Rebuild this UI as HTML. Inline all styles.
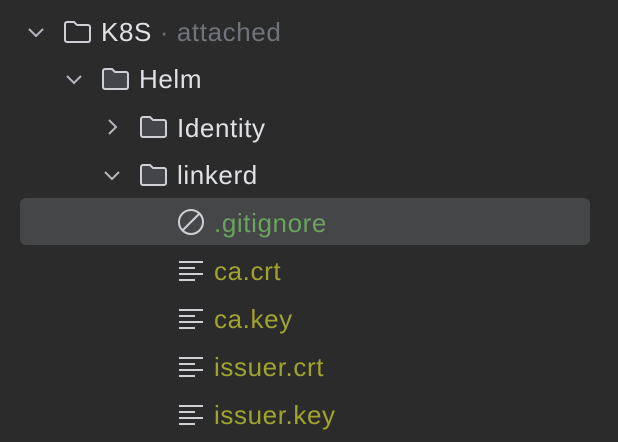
<!DOCTYPE html>
<html><head><style>
body{margin:0;width:618px;height:442px;background:#2b2b2b;font-family:"Liberation Sans",sans-serif;font-size:26px;letter-spacing:0.6px;color:#dfe1e5;position:relative;overflow:hidden}
.r{position:absolute;height:48px;line-height:50px;white-space:nowrap}
.sel{position:absolute;left:20px;top:198px;width:570px;height:47px;background:#454647;border-radius:6px}
svg{position:absolute}
</style></head><body>
<div class="sel"></div>
<svg style="left:26px;top:22px" width="20" height="20"><path d="M3 7l7 7 7-7" fill="none" stroke="#b4b8bf" stroke-width="2"/></svg>
<svg style="left:64px;top:69px" width="20" height="20"><path d="M3 7l7 7 7-7" fill="none" stroke="#b4b8bf" stroke-width="2"/></svg>
<svg style="left:102px;top:117px" width="20" height="20"><path d="M7 3l7 7-7 7" fill="none" stroke="#b4b8bf" stroke-width="2"/></svg>
<svg style="left:102px;top:165px" width="20" height="20"><path d="M3 7l7 7 7-7" fill="none" stroke="#b4b8bf" stroke-width="2"/></svg>
<svg style="left:63px;top:19px" width="30" height="26"><path d="M2 5a2 2 0 0 1 2-2h7l3 3h11a2 2 0 0 1 2 2v13a2 2 0 0 1-2 2H4a2 2 0 0 1-2-2z" fill="none" stroke="#ced0d6" stroke-width="2"/></svg>
<svg style="left:101px;top:66px" width="30" height="26"><path d="M2 5a2 2 0 0 1 2-2h7l3 3h11a2 2 0 0 1 2 2v13a2 2 0 0 1-2 2H4a2 2 0 0 1-2-2z" fill="#43454a" stroke="#ced0d6" stroke-width="2"/></svg>
<svg style="left:139px;top:114px" width="30" height="26"><path d="M2 5a2 2 0 0 1 2-2h7l3 3h11a2 2 0 0 1 2 2v13a2 2 0 0 1-2 2H4a2 2 0 0 1-2-2z" fill="#43454a" stroke="#ced0d6" stroke-width="2"/></svg>
<svg style="left:139px;top:162px" width="30" height="26"><path d="M2 5a2 2 0 0 1 2-2h7l3 3h11a2 2 0 0 1 2 2v13a2 2 0 0 1-2 2H4a2 2 0 0 1-2-2z" fill="#43454a" stroke="#ced0d6" stroke-width="2"/></svg>
<svg style="left:177px;top:208px" width="28" height="28"><circle cx="14" cy="14" r="12" fill="none" stroke="#ced0d6" stroke-width="2"/><path d="M6 22L22 6" stroke="#ced0d6" stroke-width="2"/></svg>
<svg style="left:179px;top:260px" width="26" height="22"><path d="M0 2h24M0 8h16M0 14h24M0 20h16" stroke="#ced0d6" stroke-width="2"/></svg>
<svg style="left:179px;top:308px" width="26" height="22"><path d="M0 2h24M0 8h16M0 14h24M0 20h16" stroke="#ced0d6" stroke-width="2"/></svg>
<svg style="left:179px;top:356px" width="26" height="22"><path d="M0 2h24M0 8h16M0 14h24M0 20h16" stroke="#ced0d6" stroke-width="2"/></svg>
<svg style="left:179px;top:404px" width="26" height="22"><path d="M0 2h24M0 8h16M0 14h24M0 20h16" stroke="#ced0d6" stroke-width="2"/></svg>
<div class="r" style="left:101px;top:7px">K8S <span style="color:#6f737a">· attached</span></div>
<div class="r" style="left:139px;top:54px">Helm</div>
<div class="r" style="left:177px;top:103px">Identity</div>
<div class="r" style="left:177px;top:150px">linkerd</div>
<div class="r" style="left:214px;top:198px;color:#6aa35d">.gitignore</div>
<div class="r" style="left:214px;top:246px;color:#a1a32f">ca.crt</div>
<div class="r" style="left:214px;top:294px;color:#a1a32f">ca.key</div>
<div class="r" style="left:214px;top:342px;color:#a1a32f">issuer.crt</div>
<div class="r" style="left:214px;top:390px;color:#a1a32f">issuer.key</div>
</body></html>
